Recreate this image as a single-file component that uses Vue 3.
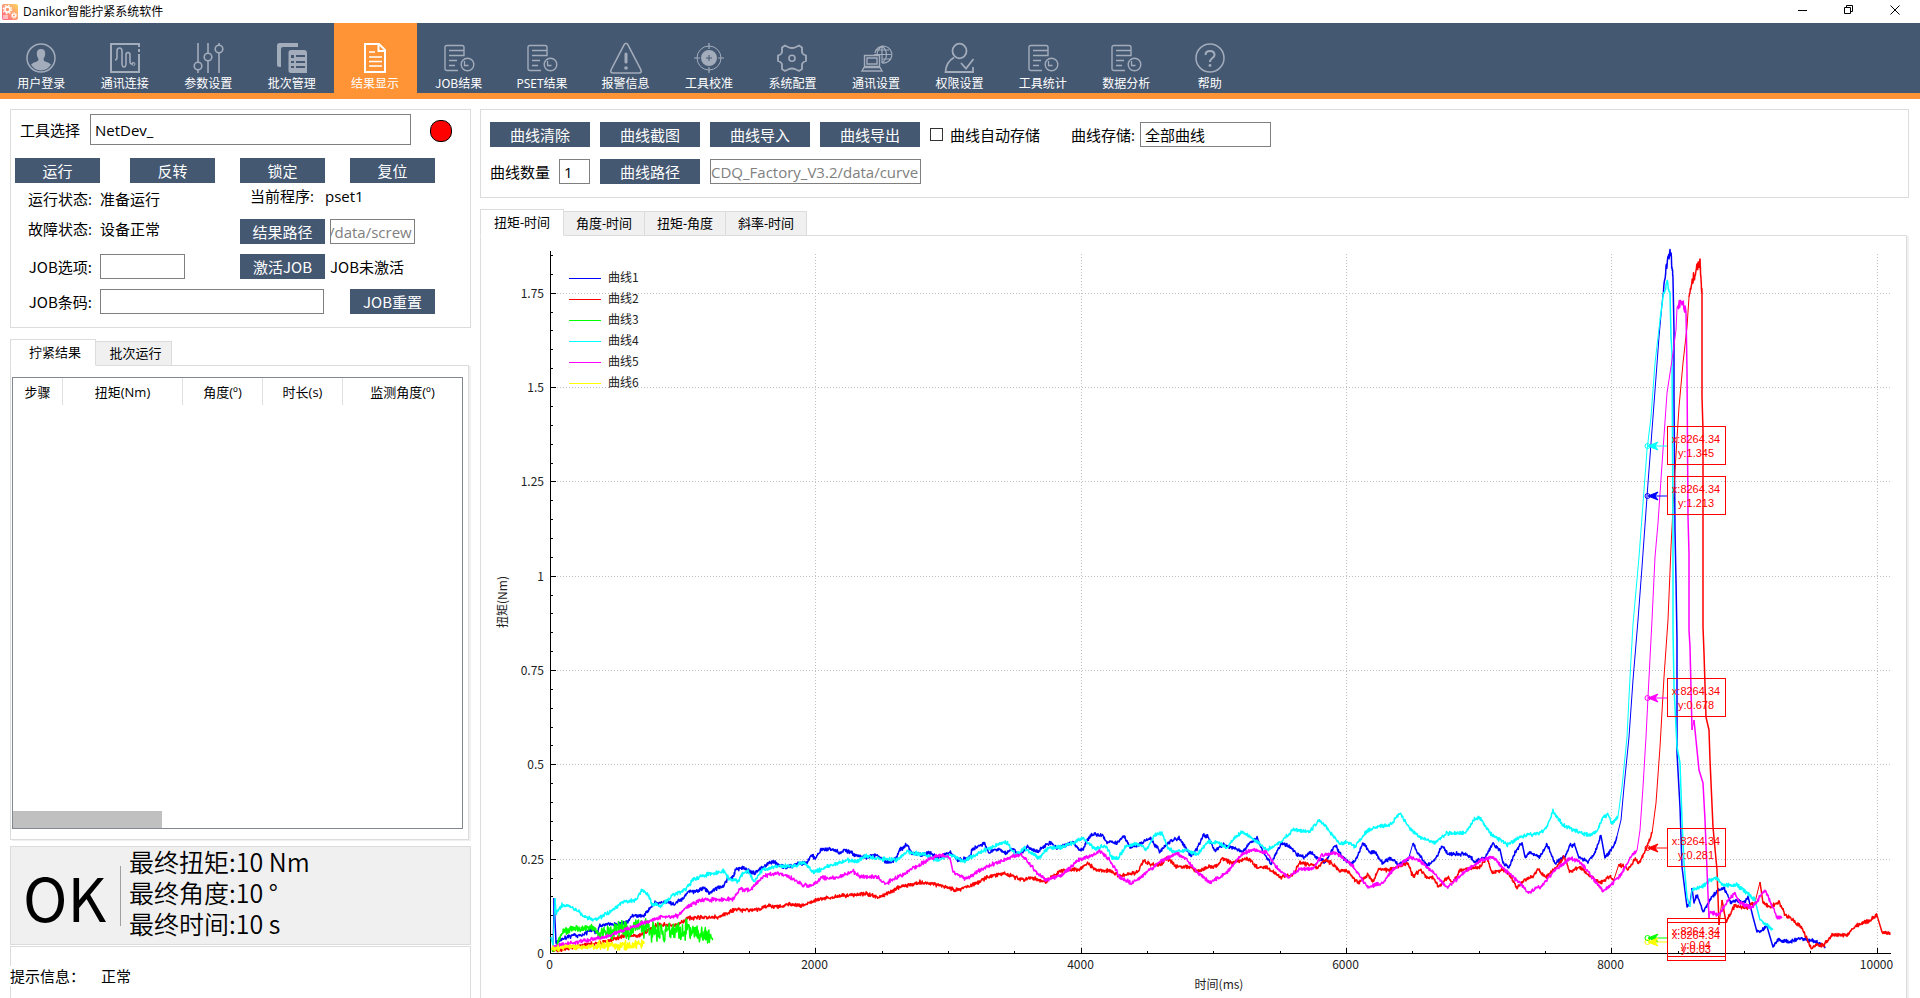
<script setup>
import { ref, onMounted } from 'vue'

const navItems = [
  { label: '用户登录', icon: 'user' },
  { label: '通讯连接', icon: 'wave' },
  { label: '参数设置', icon: 'sliders' },
  { label: '批次管理', icon: 'batch' },
  { label: '结果显示', icon: 'doc' },
  { label: 'JOB结果', icon: 'report', job: true },
  { label: 'PSET结果', icon: 'report' },
  { label: '报警信息', icon: 'warn' },
  { label: '工具校准', icon: 'target' },
  { label: '系统配置', icon: 'gear' },
  { label: '通讯设置', icon: 'network' },
  { label: '权限设置', icon: 'auth' },
  { label: '工具统计', icon: 'report' },
  { label: '数据分析', icon: 'report' },
  { label: '帮助', icon: 'help' },
]
const activeNav = ref(4)
const resultTabs = ['拧紧结果', '批次运行']
const activeResultTab = ref(0)
const chartTabs = ['扭矩-时间', '角度-时间', '扭矩-角度', '斜率-时间']
const activeChartTab = ref(0)
const columns = ['步骤', '扭矩(Nm)', '角度(º)', '时长(s)', '监测角度(º)']
const summary = ['最终扭矩:10 Nm', '最终角度:10 °', '最终时间:10 s']

/* Long paths show their last folder. */
const resultPath = ref(null)
const curvePath = ref(null)
onMounted(() => {
  for (const field of [resultPath.value, curvePath.value]) {
    field.scrollLeft = field.scrollWidth
  }
})

/* chart geometry */
const AXIS_X = 550.5
const AXIS_Y = 953.5
const X_RIGHT = 1891
const Y_TOP = 251
const PER_MS = 0.13265
const PER_NM = 377.3
const px = (ms) => Math.round(AXIS_X - 0.5 + ms * PER_MS) + 0.5
const py = (nm) => Math.round(AXIS_Y - 0.5 - nm * PER_NM) + 0.5

const xMajor = [0, 2000, 4000, 6000, 8000, 10000]
const yMajor = [0, 0.25, 0.5, 0.75, 1, 1.25, 1.5, 1.75]
const xMinor = Array.from({ length: 20 }, (_, i) => i * 500)
const yMinor = Array.from({ length: 38 }, (_, i) => i * 0.05)

const series = [
  {
    name: '曲线1', color: '#0000ff', noise: 3,
    pts: '552,950 553,946 554,898 556,943 562,939 571,936 583,936 590,930 597,932 600,926 612,924 626,923 633,915 643,916 655,903 667,902 674,904 683,899 688,892 698,891 704,888 709,893 717,888 723,887 728,878 733,877 736,869 743,868 750,872 755,873 760,869 769,863 774,862 781,866 790,867 798,864 807,863 811,855 815,858 821,850 833,849 840,853 843,850 852,853 857,856 867,857 876,855 884,860 890,863 896,858 900,850 907,845 912,853 922,855 929,852 938,858 950,852 958,860 969,858 972,850 984,843 989,852 998,849 1007,853 1012,848 1019,855 1027,847 1038,852 1050,842 1057,848 1063,846 1072,842 1078,849 1083,850 1087,840 1093,834 1102,835 1107,842 1117,843 1124,836 1130,847 1138,845 1150,838 1160,852 1168,842 1179,838 1186,848 1191,856 1197,849 1203,836 1208,836 1215,851 1223,845 1233,848 1243,852 1251,842 1257,838 1263,852 1271,863 1277,852 1282,843 1290,847 1297,855 1305,857 1310,852 1317,858 1325,862 1335,845 1342,857 1350,863 1355,862 1363,843 1370,853 1375,852 1383,863 1390,858 1398,864 1408,860 1413,843 1418,853 1427,866 1435,860 1442,846 1448,854 1467,854 1475,862 1485,858 1493,843 1500,850 1503,863 1509,867 1515,853 1522,842 1525,857 1530,852 1540,857 1547,844 1555,863 1565,857 1570,845 1575,845 1579,858 1588,861 1594,855 1601,835 1605,858 1613,847 1617,837 1621,820 1624,787 1629,737 1633,680 1638,620 1642,567 1648,483 1653,417 1659,337 1663,293 1666,267 1670,252 1672,263 1673,277 1674,330 1674,397 1675,530 1676,580 1677,640 1677,753 1680,807 1682,867 1687,907 1690,903 1692,888 1694,903 1697,895 1703,912 1710,900 1718,890 1724,888 1731,903 1737,900 1743,903 1748,897 1753,917 1757,932 1767,927 1773,947 1777,940 1790,942 1800,938 1817,942 1825,947',
  },
  {
    name: '曲线2', color: '#ff0000', noise: 3,
    pts: '552,951 568,948 592,944 609,941 623,936 640,935 657,925 678,925 688,918 719,917 733,910 755,910 769,906 781,907 790,904 802,906 815,900 840,896 867,894 879,897 898,888 919,882 939,885 957,890 970,886 988,877 1005,873 1022,880 1032,878 1045,882 1060,871 1080,869 1088,863 1097,871 1110,870 1119,876 1138,872 1143,861 1152,865 1160,865 1167,858 1177,867 1190,867 1197,871 1208,867 1217,866 1222,858 1232,863 1238,862 1247,858 1257,867 1267,867 1280,877 1293,875 1300,863 1312,865 1318,868 1325,860 1333,864 1340,871 1347,871 1353,878 1359,883 1368,875 1373,882 1379,869 1390,870 1402,865 1408,863 1413,877 1420,870 1428,878 1433,878 1439,887 1448,877 1453,883 1460,870 1480,867 1487,858 1492,873 1503,869 1510,875 1517,888 1525,879 1532,877 1538,869 1545,877 1557,867 1564,857 1570,872 1580,867 1588,875 1600,883 1610,876 1614,880 1619,864 1628,869 1635,859 1639,863 1645,851 1652,833 1656,803 1660,747 1664,677 1668,620 1671,547 1675,470 1679,407 1683,363 1687,327 1689,297 1694,277 1700,260 1701,280 1702,293 1702,397 1703,430 1703,627 1704,653 1706,717 1709,730 1710,760 1713,827 1717,870 1719,925 1722,900 1726,922 1735,905 1747,908 1755,903 1760,882 1763,903 1770,907 1779,902 1785,915 1793,920 1802,928 1811,948 1817,945 1824,945 1832,935 1847,935 1857,925 1870,920 1877,915 1882,932 1890,933',
  },
  {
    name: '曲线3', color: '#00ff00', noise: 5, roughFrom: 598, rough: 15,
    pts: '552,951 557,945 561,933 574,929 592,927 599,933 609,933 619,927 630,933 638,922 643,928 648,924 652,932 678,931 692,929 704,937 708,938 713,937',
  },
  {
    name: '曲线4', color: '#00ffff', noise: 3,
    pts: '551,937 553,945 555,898 556,913 562,905 574,908 585,917 595,920 609,912 624,902 636,900 642,890 648,895 652,904 661,906 673,895 686,889 693,880 705,875 724,871 729,879 738,881 743,873 748,871 754,882 762,870 778,866 795,866 803,862 814,873 826,867 847,860 857,862 865,856 881,859 896,860 908,852 926,855 938,861 950,855 964,861 981,852 1001,843 1008,843 1015,855 1024,848 1039,858 1048,848 1063,847 1080,840 1083,838 1095,849 1105,845 1112,857 1118,858 1125,847 1135,843 1147,849 1155,835 1162,833 1168,848 1175,852 1187,850 1197,855 1208,842 1218,842 1227,848 1235,837 1242,832 1253,839 1267,850 1280,843 1293,830 1310,831 1319,820 1327,828 1340,844 1347,842 1355,847 1365,833 1373,828 1390,825 1400,813 1410,829 1420,837 1435,843 1447,833 1465,833 1475,819 1480,818 1490,833 1507,845 1520,837 1540,833 1547,827 1553,811 1563,825 1580,833 1590,835 1597,832 1603,817 1608,815 1612,823 1618,817 1622,787 1627,737 1630,677 1633,624 1639,557 1647,450 1651,417 1655,363 1660,320 1663,297 1667,280 1670,297 1671,337 1672,353 1673,530 1673,630 1674,687 1677,747 1680,763 1682,820 1684,863 1687,897 1690,907 1692,890 1702,887 1710,880 1717,878 1723,885 1737,885 1747,893 1755,900 1760,920 1773,930',
  },
  {
    name: '曲线5', color: '#ff00ff', noise: 3,
    pts: '552,949 557,945 574,943 588,940 609,936 616,933 631,928 643,923 661,917 678,916 686,907 702,900 733,899 740,889 750,890 764,876 776,873 788,876 803,885 812,886 822,878 836,878 853,871 860,877 878,877 885,884 902,875 926,861 939,855 950,858 953,872 965,879 984,868 1001,861 1020,854 1027,860 1036,872 1046,880 1062,875 1080,859 1087,858 1100,851 1110,860 1120,877 1132,883 1143,875 1160,862 1177,853 1187,860 1197,872 1210,883 1227,872 1243,853 1253,850 1267,853 1277,868 1288,878 1298,870 1313,868 1322,855 1337,853 1352,865 1367,887 1383,883 1393,870 1410,857 1420,861 1433,872 1447,888 1463,873 1480,861 1493,857 1507,872 1522,885 1528,893 1542,886 1553,872 1570,858 1580,862 1600,887 1603,892 1613,883 1622,873 1630,858 1637,850 1640,830 1643,787 1646,737 1648,697 1652,620 1655,557 1658,523 1663,450 1667,393 1672,360 1676,330 1677,308 1682,302 1686,313 1687,370 1688,517 1689,553 1689,630 1690,647 1692,730 1694,720 1699,770 1703,783 1705,820 1707,870 1709,918 1710,912 1719,915 1728,900 1735,893 1740,903 1752,908 1765,890 1777,917 1782,917',
  },
  {
    name: '曲线6', color: '#ffff00', noise: 4, roughFrom: 596, rough: 8,
    pts: '551,949 570,947 600,946 625,946 644,944',
  },
]

/*
 * Joins the sampled points and adds the sensor ripple between them.
 * The steep rise is kept apart, as it is drawn with a thinner pen.
 */
function tracePaths(s, seed) {
  let state = seed * 7919 + 17
  const rand = () => {
    state = (state * 1103515245 + 12345) % 2147483648
    return state / 2147483648 - 0.5
  }
  const pts = s.pts.split(' ').map((p) => p.split(',').map(Number))
  let last = pts[0].join(' ')
  let rough = 'M' + last
  let rise = ''
  for (let i = 1; i < pts.length; i++) {
    const [x0, y0] = pts[i - 1]
    const [x1, y1] = pts[i]
    const dx = x1 - x0
    const dy = y1 - y0
    const steep = Math.abs(dy) > 3 * Math.max(dx, 1)
    if (steep && dy < 0 && y0 > 320) {
      const end = x1 + ' ' + y1
      rise += 'M' + last + 'L' + end
      rough += 'M' + end
      last = end
      continue
    }
    const peak = y0 < 320 && y1 < 320
    const n = steep && !peak ? 1 : Math.max(1, Math.round(Math.max(dx, peak ? 3 : 0) * 2.2))
    for (let k = 1; k <= n; k++) {
      const x = x0 + (dx * k) / n
      let amp = s.roughFrom && x > s.roughFrom ? s.rough : s.noise
      if (peak) amp = 9
      if (steep && !peak) amp = 0
      const y = Math.min(953, y0 + (dy * k) / n + rand() * amp * 2 * (0.3 + Math.abs(rand())))
      last = x.toFixed(1) + ' ' + y.toFixed(1)
      rough += 'L' + last
    }
  }
  return { rough, rise }
}
const traces = series.map((s, i) => ({ name: s.name, color: s.color, ...tracePaths(s, i + 1) }))

const markers = [
  { y: 446, color: '#00ffff', value: '1.345' },
  { y: 496, color: '#0000ff', value: '1.213' },
  { y: 698, color: '#ff00ff', value: '0.678' },
  { y: 848, color: '#ff0000', value: '0.281' },
  { y: 938, color: '#00ff00', value: '0.04' },
  { y: 942, color: '#ffff00', value: '0.03' },
]
</script>

<template>
  <div class="app">
    <header class="titlebar">
      <svg class="logo" viewBox="0 0 16 16" aria-hidden="true">
        <defs>
          <linearGradient id="logoFill" x1="1" y1="0" x2="0" y2="1">
            <stop offset="0" stop-color="#ffd65c" />
            <stop offset="1" stop-color="#ff5c86" />
          </linearGradient>
        </defs>
        <rect width="16" height="16" rx="2" fill="url(#logoFill)" />
        <g fill="none" stroke="#fff">
          <circle cx="5.500" cy="5.500" r="2.600" stroke-width="1.600" />
          <circle cx="5.500" cy="5.500" r="4.200" stroke-width="1.200" stroke-dasharray="1.600 1.700" />
          <circle cx="12" cy="11.500" r="1.600" stroke-width="1.200" />
          <circle cx="12" cy="11.500" r="2.700" stroke-width="1" stroke-dasharray="1.100 1" />
          <path d="M1 12h5M1 14h5" />
        </g>
      </svg>
      <h1 class="title">Danikor智能拧紧系统软件</h1>
      <div class="winbtns">
        <button type="button" aria-label="最小化"><svg viewBox="0 0 10 10"><path d="M0 5.500h9" /></svg></button>
        <button type="button" aria-label="还原"><svg viewBox="0 0 10 10"><path d="M.5 2.500h6v6h-6zM2.500 2.500v-2h6v6h-2" /></svg></button>
        <button type="button" aria-label="关闭"><svg viewBox="0 0 10 10"><path d="M.5.5l9 9M9.500.5l-9 9" /></svg></button>
      </div>
    </header>

    <nav class="toolbar">
      <div class="navlist">
        <button
          v-for="(item, i) in navItems"
          :key="item.label"
          type="button"
          class="navitem"
          :class="{ active: i === activeNav, job: item.job }"
          @click="activeNav = i"
        >
          <svg class="navicon" viewBox="0 0 30 30" aria-hidden="true">
            <template v-if="item.icon === 'user'">
              <circle cx="15" cy="15" r="14" stroke-width="1.500" />
              <path class="solid" d="M15 6c3 0 4.300 2 4.200 4.700c0 2.300-.8 3.600-1.500 4.700c-.3 1.400 0 2.300 1 2.800c2.200.9 4.700 1.600 6.300 3.300c-2.200 3.800-5.600 6-10 6s-7.800-2.200-10-6c1.600-1.700 4.100-2.400 6.300-3.300c1-.5 1.300-1.400 1-2.800c-.8-1.100-1.500-2.400-1.500-4.700C10.800 8 12 6 15 6z" />
            </template>
            <template v-else-if="item.icon === 'wave'">
              <path d="M29 11v18H1V1h28v3M29 6v3" stroke-width="2" />
              <path d="M5 17q2 0 2-3V8q0-3 2.500-3t2.500 3v12q0 4 2 4t2-4v-8q0-2.500 2-2.500t2 2.500v6q0 3 1.500 3t1.500-2" stroke-width="1.600" />
              <circle cx="23.500" cy="21" r="1.500" />
            </template>
            <template v-else-if="item.icon === 'sliders'">
              <path d="M5 0v19M5 27v3M15 0v10M15 18v12M26 10v20M26 0v2" stroke-width="1.600" />
              <circle cx="5" cy="23" r="3.800" stroke-width="1.600" />
              <circle cx="15" cy="14" r="3.800" stroke-width="1.600" />
              <circle cx="26" cy="6" r="3.800" stroke-width="1.600" />
            </template>
            <template v-else-if="item.icon === 'batch'">
              <path class="solid" d="M0 2.500Q0 0 2.500 0H21v4H6q-2 0-2 2v18H2.500Q0 24 0 21.500z" />
              <path class="solid" fill-rule="evenodd" d="M14 7h13q3 0 3 3v20H14q-2.500 0-2.500-2.500V9.500Q11.500 7 14 7zM14 12v3h3v-3zM19 12v2h9v-2zM14 18v2h3v-2zM19 18v2h9v-2zM14 23v2h3v-2zM19 23v2h9v-2z" />
            </template>
            <template v-else-if="item.icon === 'doc'">
              <path d="M5 1h14l6 6v22H5z" stroke-width="2" />
              <path d="M18.500 1v7H25" stroke-width="2" />
              <path d="M9 9h6M9 14h13M9 18.500h13M9 23h13" stroke-width="1.500" />
            </template>
            <template v-else-if="item.icon === 'report'">
              <path d="M14 27.500H3q-2 0-2-2v-21q0-2 2-2h15q2 0 2 2v8H5M5 7.500h15M5 17.500h8M5 22.500h6" stroke-width="1.400" />
              <circle cx="23.500" cy="21.500" r="6.300" stroke-width="1.400" />
              <path d="M20.500 18v4.500h4" stroke-width="1.300" />
            </template>
            <template v-else-if="item.icon === 'warn'">
              <path d="M13.300 1.500q1.700-2.600 3.400 0L30 27q1 3-2 3H2q-3 0-2-3z" stroke-width="1.600" />
              <path d="M15 11v8" stroke-width="3" stroke-linecap="round" />
              <circle class="solid" cx="15" cy="25" r="1.800" />
            </template>
            <template v-else-if="item.icon === 'target'">
              <circle cx="15" cy="15" r="12" stroke-width="1" />
              <path d="M15 0v6M15 24v6M0 15h6M24 15h6" stroke-width="1.200" />
              <path class="solid" fill-rule="evenodd" d="M15 7a8 8 0 1 0 0 16a8 8 0 1 0 0-16zM14.500 12h1v2.500H18v1h-2.500V18h-1v-2.500H12v-1h2.500z" />
            </template>
            <template v-else-if="item.icon === 'gear'">
              <path d="M8 2.500l3.500 1.700q3.500 1.600 7 0L22 2.500l3 2v4.500q.3 2.500 4 3.500v5.500q-3.700 1-4 3.500v4.500l-3 2l-3.500-1.700q-3.500-1.600-7 0L8 28l-3-2v-4.500q-.3-2.500-4-3.500v-5.500q3.700-1 4-3.500V4.500z" stroke-width="1.800" stroke-linejoin="round" />
              <circle cx="15" cy="15.200" r="3" stroke-width="1.600" />
            </template>
            <template v-else-if="item.icon === 'network'">
              <path d="M14 10a8.500 8.500 0 1 1 7 10M21 3v17M13 11.500h17M15 7h13M21 16h8M21 3c-5 4-5 8-5 9M21 3c6 5 6 12 0 17" stroke-width="1.200" />
              <path d="M3.500 12.500h15v11h-15zM6 15h10v6H6zM3 24.500h16l2 3.500H1z" stroke-width="1.400" />
            </template>
            <template v-else-if="item.icon === 'auth'">
              <ellipse cx="15.500" cy="8" rx="7" ry="7.300" stroke-width="1.800" />
              <path d="M10 14.500Q2 19 1.500 29H29v-5M17 20l5 5.500l7.500-9.500" stroke-width="1.800" />
            </template>
            <template v-else>
              <circle cx="15" cy="15" r="14" stroke-width="1.500" />
              <path d="M10.500 12q0-4 4.500-4t4.500 4c0 3-4.500 3.300-4.500 7" stroke-width="2" />
              <circle class="solid" cx="15" cy="22.500" r="1.400" />
            </template>
          </svg>
          <span>{{ item.label }}</span>
        </button>
      </div>
    </nav>

    <main class="content">
      <section class="side">
        <div class="panel control">
          <div class="toolrow">
            <label for="tool">工具选择</label>
            <select id="tool" class="field"><option>NetDev_</option></select>
            <span class="lamp"></span>
          </div>
          <div class="btnrow">
            <button type="button" class="btn">运行</button>
            <button type="button" class="btn">反转</button>
            <button type="button" class="btn">锁定</button>
            <button type="button" class="btn">复位</button>
          </div>
          <div class="formgrid">
            <span class="lbl low">运行状态:</span>
            <span class="low">准备运行</span>
            <div class="program"><span>当前程序:</span><span>pset1</span></div>

            <span class="lbl high">故障状态:</span>
            <span class="high">设备正常</span>
            <button type="button" class="btn">结果路径</button>
            <input ref="resultPath" class="field path short" type="text" readonly value="/data/screw" aria-label="结果路径" />

            <label class="lbl job" for="jobopt">JOB选项:</label>
            <input id="jobopt" class="field short" type="text" />
            <button type="button" class="btn job">激活JOB</button>
            <span class="job">JOB未激活</span>

            <label class="lbl job" for="jobcode">JOB条码:</label>
            <input id="jobcode" class="field code" type="text" />
            <button type="button" class="btn job reset">JOB重置</button>
          </div>
        </div>

        <div class="tabs lefttabs" role="tablist">
          <button
            v-for="(t, i) in resultTabs"
            :key="t"
            type="button"
            role="tab"
            class="tab"
            :class="{ active: i === activeResultTab }"
            @click="activeResultTab = i"
          >{{ t }}</button>
        </div>
        <div class="pane resultpane">
          <div class="tablebox">
            <table>
              <thead>
                <tr><th v-for="c in columns" :key="c" scope="col">{{ c }}</th></tr>
              </thead>
            </table>
            <div class="thumb"></div>
          </div>
        </div>

        <div class="panel verdict">
          <strong class="ok">OK</strong>
          <span class="rule"></span>
          <div class="summary"><p v-for="s in summary" :key="s">{{ s }}</p></div>
        </div>
        <div class="panel hint"><p><span>提示信息：</span><span>正常</span></p></div>
      </section>

      <section class="main">
        <div class="panel curvebar">
          <div class="curverow">
            <button type="button" class="btn wide">曲线清除</button>
            <button type="button" class="btn wide">曲线截图</button>
            <button type="button" class="btn wide">曲线导入</button>
            <button type="button" class="btn wide">曲线导出</button>
            <label class="check"><input type="checkbox" />曲线自动存储</label>
            <label class="store">曲线存储:
              <select class="field"><option>全部曲线</option></select>
            </label>
          </div>
          <div class="curverow">
            <label class="count">曲线数量<input class="field" type="text" value="1" /></label>
            <button type="button" class="btn wide">曲线路径</button>
            <input ref="curvePath" class="field path long" type="text" readonly value="CDQ_Factory_V3.2/data/curve" aria-label="曲线路径" />
          </div>
        </div>

        <div class="tabs" role="tablist">
          <button
            v-for="(t, i) in chartTabs"
            :key="t"
            type="button"
            role="tab"
            class="tab"
            :class="{ active: i === activeChartTab }"
            @click="activeChartTab = i"
          >{{ t }}</button>
        </div>
        <div class="pane chartpane">
          <svg class="chart" viewBox="481 236 1425 762" preserveAspectRatio="xMidYMin meet">
            <g class="grid">
              <line v-for="t in yMajor.slice(1)" :key="'gy' + t" :x1="AXIS_X" :x2="1890" :y1="py(t)" :y2="py(t)" />
              <line v-for="t in xMajor.slice(1)" :key="'gx' + t" :x1="px(t)" :x2="px(t)" :y1="254" :y2="AXIS_Y" />
            </g>
            <g class="axis">
              <line :x1="AXIS_X" :x2="AXIS_X" :y1="Y_TOP" :y2="954" />
              <line :x1="550" :x2="X_RIGHT" :y1="AXIS_Y" :y2="AXIS_Y" />
              <line v-for="t in yMajor" :key="'ty' + t" x1="551" x2="556" :y1="py(t)" :y2="py(t)" />
              <line v-for="t in yMinor" :key="'my' + t" x1="551" x2="553" :y1="py(t)" :y2="py(t)" />
              <line v-for="t in xMajor" :key="'tx' + t" :x1="px(t)" :x2="px(t)" y1="948" y2="953" />
              <line v-for="t in xMinor" :key="'mx' + t" :x1="px(t)" :x2="px(t)" y1="951" y2="953" />
            </g>
            <g class="ticks">
              <text v-for="t in yMajor" :key="'ly' + t" x="544" :y="py(t) + 4" text-anchor="end">{{ t }}</text>
              <text v-for="t in xMajor" :key="'lx' + t" :x="px(t) - 1" y="969" text-anchor="middle">{{ t }}</text>
              <text x="1219" y="989" text-anchor="middle">时间(ms)</text>
              <text x="0" y="0" text-anchor="middle" transform="translate(507 602) rotate(-90)">扭矩(Nm)</text>
            </g>
            <g v-for="t in traces" :key="t.name" class="trace" :stroke="t.color">
              <path class="rise" :d="t.rise" />
              <path :d="t.rough" />
            </g>
            <g v-for="(t, i) in traces" :key="'k' + t.name">
              <line class="key" x1="569" x2="601" :y1="278.5 + i * 21" :y2="278.5 + i * 21" :stroke="t.color" />
              <text class="keytext" x="608" :y="282 + i * 21">{{ t.name }}</text>
            </g>
            <g v-for="m in markers" :key="m.value">
              <circle cx="1647.500" :cy="m.y" r="2.500" fill="none" :stroke="m.color" />
              <line x1="1655" x2="1667" :y1="m.y" :y2="m.y" :stroke="m.color" />
              <path :d="`M1648 ${m.y}l10-4l-3 4l3 4z`" :fill="m.color" :stroke="m.color" />
              <rect class="tip" x="1667.500" :y="m.y - 19.5" width="58" height="38" />
              <text class="tiptext" x="1696" :y="m.y - 3" text-anchor="middle">x:8264.34</text>
              <text class="tiptext" x="1696" :y="m.y + 11" text-anchor="middle">y:{{ m.value }}</text>
            </g>
          </svg>
        </div>
      </section>
    </main>
  </div>
</template>

<style>
body {
  margin: 0;
  background: #fff;
}
</style>

<style scoped>
.app {
  display: flex;
  flex-direction: column;
  height: 100vh;
  overflow: hidden;
  font-family: "Open Sans", "Noto Sans CJK SC", sans-serif;
  font-size: 15px;
  line-height: 20px;
  color: #000;
}
button,
input,
select {
  box-sizing: border-box;
  margin: 0;
  border: 0;
  border-radius: 0;
  padding: 0;
  font: inherit;
  color: inherit;
  appearance: none;
}
p {
  margin: 0;
}
.job {
  font-family: "Noto Sans CJK SC", sans-serif;
}

.titlebar {
  display: flex;
  flex: none;
  align-items: center;
  height: 23px;
  padding-left: 2px;
}
.logo {
  width: 16px;
  height: 16px;
}
.title {
  flex: 1;
  margin: 0 0 0 5px;
  font-size: 12px;
  font-weight: 400;
}
.winbtns {
  display: flex;
  padding: 0 2px 3px 0;
}
.winbtns button {
  display: grid;
  place-items: center;
  width: 46px;
  height: 20px;
  background: none;
}
.winbtns svg {
  width: 10px;
  height: 10px;
  fill: none;
  stroke: #000;
}

.toolbar {
  flex: none;
  height: 70px;
  background: #455872;
  border-bottom: 6px solid #ff9436;
}
.navlist {
  display: flex;
  height: 100%;
  max-width: 1252px;
}
.navitem {
  display: flex;
  flex: 1 1 0;
  flex-direction: column;
  align-items: center;
  padding: 20px 1px 0 0;
  background: none;
  color: #fff;
  font-size: 12px;
  line-height: 20px;
  white-space: nowrap;
}
.navitem span {
  margin-top: 1px;
}
.navitem.job span {
  margin-top: 0;
}
.navitem.active {
  background: #ff9436;
}
.navicon {
  flex: none;
  width: 30px;
  height: 30px;
  overflow: visible;
  fill: none;
  stroke: #a2acbb;
}
.navicon .solid {
  fill: #a2acbb;
  stroke: none;
}
.active .navicon {
  stroke: #fff;
}

.content {
  display: grid;
  flex: 1;
  grid-template-columns: 461px minmax(0, 1fr);
  gap: 9px;
  min-height: 0;
  padding: 10px 11px 0 10px;
}
.side,
.main {
  display: flex;
  flex-direction: column;
  min-height: 0;
}
.panel {
  flex: none;
  box-sizing: border-box;
  border: 1px solid #dcdcdc;
}
.field {
  height: 25px;
  padding: 0 4px;
  border: 1px solid #7f7f7f;
  background: #fff;
}
.btn {
  width: 85px;
  height: 25px;
  padding-top: 1px;
  background: #455872;
  color: #fff;
}

.control {
  padding: 4px 4px 13px;
}
.toolrow {
  display: flex;
  align-items: center;
  padding-left: 5px;
}
.toolrow label {
  width: 70px;
}
.toolrow .field {
  width: 321px;
  height: 31px;
}
.lamp {
  box-sizing: border-box;
  width: 22px;
  height: 22px;
  margin: 2px 0 0 19px;
  border: 1px solid #000;
  border-radius: 10px;
  background: #f00;
}
.btnrow {
  display: flex;
  gap: 25px;
  margin-top: 13px;
}
.btnrow .btn:first-child {
  margin-right: 5px;
}
.formgrid {
  display: grid;
  grid-template-columns: 85px 140px 90px 1fr;
  grid-auto-rows: 25px;
  row-gap: 10px;
  align-items: center;
  margin-top: 1px;
}
.lbl {
  padding-right: 8px;
  text-align: right;
}
.low {
  align-self: end;
}
.high {
  align-self: start;
}
.program {
  display: flex;
  grid-column: 3 / 5;
  gap: 11px;
  padding: 0 0 2px 10px;
}
.short {
  width: 85px;
}
.path {
  padding: 0 2px 0 0;
  color: #808080;
}
.code {
  grid-column: 2 / 4;
  width: 224px;
}
.reset {
  margin-left: 20px;
}

.tabs {
  display: flex;
  flex: none;
  align-items: flex-end;
  height: 27px;
  margin: 11px 0 -1px;
  position: relative;
  z-index: 1;
}
.tab {
  width: 81px;
  height: 25px;
  padding-bottom: 2px;
  border: 1px solid #dcdcdc;
  border-left: 0;
  background: #f0f0f0;
  font-size: 13px;
}
.tab.active {
  width: 84px;
  height: 27px;
  border-left: 1px solid #dcdcdc;
  border-bottom-color: #fff;
  background: #fff;
}
.lefttabs .tab {
  width: 76px;
  padding-left: 4px;
}
.lefttabs .tab.active {
  width: 86px;
}
.pane {
  flex: 1;
  min-height: 0;
  margin-right: 2px;
  border: 1px solid #dcdcdc;
  box-shadow: 2px 1px 0 #f0f0f0;
}
.resultpane {
  display: flex;
  padding: 11px 5px 10px 1px;
}
.tablebox {
  display: flex;
  flex: 1;
  flex-direction: column;
  justify-content: space-between;
  border: 1px solid #828790;
}
table {
  width: 100%;
  border-collapse: collapse;
  table-layout: fixed;
}
th {
  height: 27px;
  padding: 0;
  border-right: 1px solid #e0e0e0;
  font-size: 13px;
  font-weight: 400;
}
th:nth-child(1) {
  width: 49px;
}
th:nth-child(2) {
  width: 119px;
}
th:nth-child(3),
th:nth-child(4) {
  width: 79px;
}
th:last-child {
  border-right: 0;
}
.thumb {
  width: 149px;
  height: 17px;
  background: #c0c0c0;
}
.verdict {
  display: flex;
  align-items: center;
  height: 99px;
  margin-top: 6px;
  padding-left: 12px;
  background: #f0f0f0;
  font-family: "Noto Sans CJK SC", sans-serif;
}
.ok {
  width: 97px;
  font-size: 60px;
  font-weight: 400;
  line-height: 80px;
}
.rule {
  width: 1px;
  height: 60px;
  background: #a0a0a0;
}
.summary {
  margin: 0 0 6px 8px;
  font-size: 25px;
  font-weight: 350;
  line-height: 31px;
}
.hint {
  height: 52px;
  margin-top: 1px;
  padding-top: 19px;
  border-bottom: 0;
}
.hint p {
  display: flex;
  width: 130px;
  margin-left: -1px;
  background: #fff;
}
.hint span:first-child {
  width: 91px;
}

.curvebar {
  display: flex;
  flex-direction: column;
  gap: 12px;
  padding: 12px 9px 13px;
}
.curverow {
  display: flex;
  align-items: center;
  gap: 10px;
}
.wide {
  width: 100px;
}
.check,
.store,
.count {
  display: flex;
  align-items: center;
  white-space: nowrap;
}
.check input {
  width: 13px;
  height: 13px;
  margin-right: 7px;
  border: 1px solid #333;
  background: #fff;
}
.store {
  gap: 5px;
  margin-left: 21px;
}
.store .field {
  width: 131px;
}
.count .field {
  width: 31px;
  margin-left: 9px;
}
.curverow .long {
  width: 211px;
}
.chartpane {
  border-bottom: 0;
}
.chart {
  display: block;
  width: 100%;
  height: 100%;
  font-family: "Noto Sans CJK SC", sans-serif;
  font-size: 12px;
}
.grid line {
  stroke: #c0c0c0;
  stroke-dasharray: 1 2;
  shape-rendering: crispEdges;
}
.axis line {
  stroke: #000;
  shape-rendering: crispEdges;
}
.ticks text,
.keytext {
  fill: #222;
}
.trace path {
  fill: none;
  stroke-width: 1.5;
  stroke-linejoin: round;
}
.trace .rise {
  stroke-width: 1;
}
.tip {
  fill: none;
  stroke: #f00;
}
.tiptext {
  fill: #f00;
  font-family: "Liberation Sans", sans-serif;
  font-size: 11px;
}
</style>
